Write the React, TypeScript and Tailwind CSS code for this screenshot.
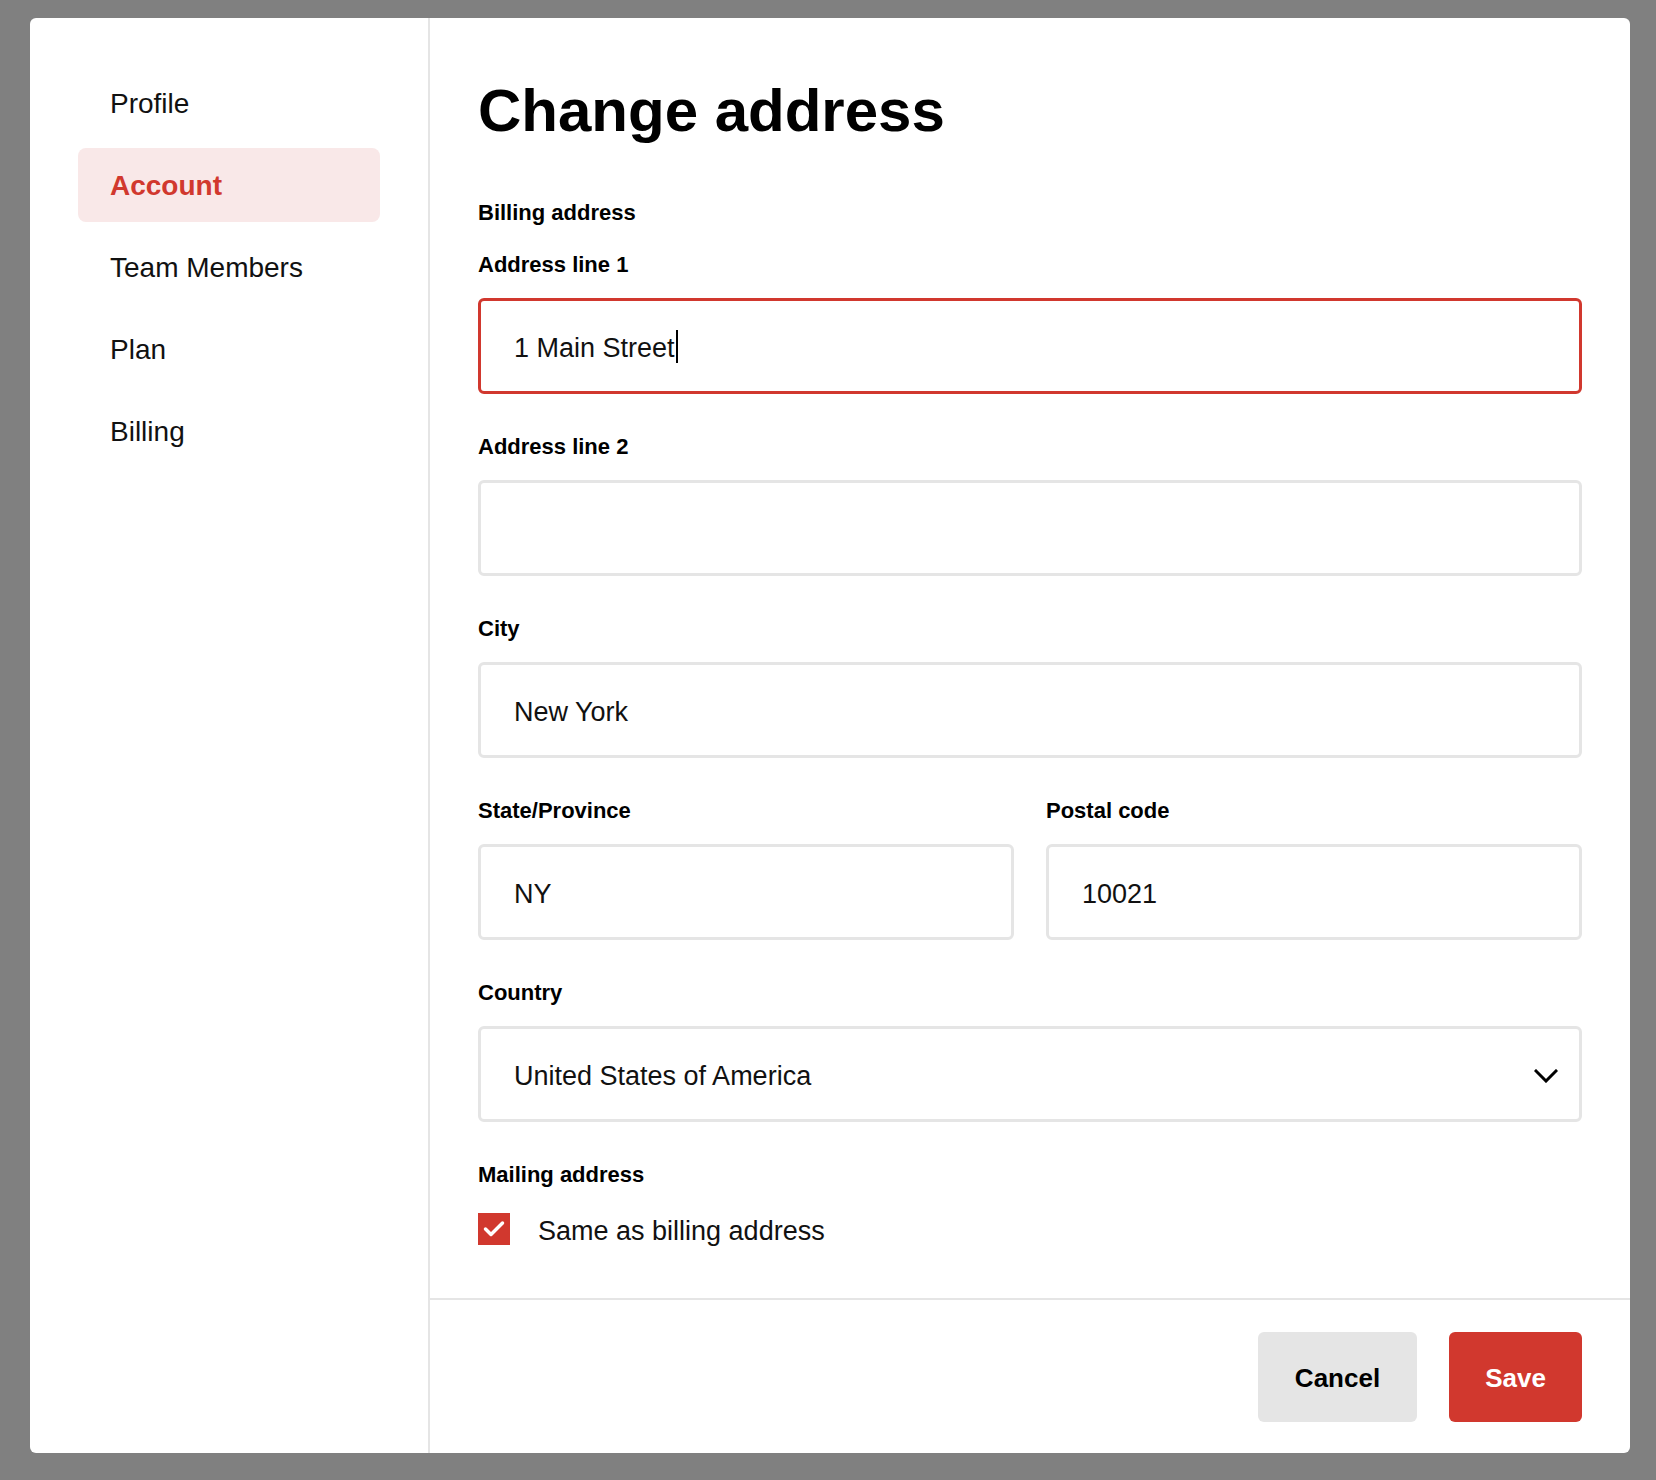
import React from "react";

const RED = "bg-[#d1382e]";

function Label({ children }: { children: React.ReactNode }) {
  return <div className="pt-[1px] text-[22px] font-bold leading-[30px] text-black">{children}</div>;
}

function Field({
  label,
  value,
  focused,
  caret,
}: {
  label: string;
  value?: string;
  focused?: boolean;
  caret?: boolean;
}) {
  return (
    <div className="flex flex-col">
      <Label>{label}</Label>
      <div
        className={
          "mt-[18px] flex h-[96px] items-center rounded-md border-[3px] pl-[33px] pt-[5px] text-[27px] text-[#111] " +
          (focused ? "border-[#d1382e]" : "border-[#e5e5e5]")
        }
      >
        <span>{value}</span>
        {caret && <span className="ml-[1px] mb-[4px] inline-block h-[33px] w-[2px] bg-black" />}
      </div>
    </div>
  );
}

export default function App() {
  const nav = ["Profile", "Account", "Team Members", "Plan", "Billing"];
  return (
    <div className="min-h-[1480px] bg-[#808080] pb-[27px] pl-[30px] pr-[26px] pt-[18px] font-['Liberation_Sans',Arial,sans-serif]">
      <div className="flex h-[1435px] overflow-hidden rounded-md bg-white">
        <aside className="w-[400px] shrink-0 border-r-2 border-[#e5e5e5] px-[48px] pt-[48px]">
          <nav className="flex flex-col gap-2">
            {nav.map((n) => (
              <div
                key={n}
                className={
                  "flex h-[74px] items-center rounded-lg pl-[32px] pt-[2px] text-[28px] " +
                  (n === "Account" ? "bg-[#f9e8e8] font-bold text-[#d1382e]" : "text-[#111]")
                }
              >
                {n}
              </div>
            ))}
          </nav>
        </aside>
        <div className="flex min-w-0 flex-1 flex-col">
          <div className="flex-1 px-[48px] pt-[63px]">
            <h1 className="text-[60px] font-bold leading-none text-black">Change address</h1>
            <div className="mt-[56px]">
              <Label>Billing address</Label>
            </div>
            <div className="mt-[21px] flex flex-col gap-[37px]">
              <Field label="Address line 1" value="1 Main Street" focused caret />
              <Field label="Address line 2" value="" />
              <Field label="City" value="New York" />
              <div className="grid grid-cols-2 gap-[32px]">
                <Field label="State/Province" value="NY" />
                <Field label="Postal code" value="10021" />
              </div>
              <div className="flex flex-col">
                <Label>Country</Label>
                <div className="mt-[18px] flex h-[96px] items-center justify-between rounded-md border-[3px] border-[#e5e5e5] pl-[33px] pr-[21px] text-[27px] text-[#111]">
                  <span className="pt-[5px]">United States of America</span>
                  <svg width="24" height="14" viewBox="0 0 24 14" fill="none" className="mt-[4px]">
                    <path d="M2 2 L12 12 L22 2" stroke="#000" strokeWidth="3" strokeLinecap="square" />
                  </svg>
                </div>
              </div>
              <div className="flex flex-col">
                <Label>Mailing address</Label>
                <div className="mt-[17px] flex items-center gap-[28px]">
                  <div className={"flex h-[32px] w-[32px] items-center justify-center " + RED}>
                    <svg width="32" height="32" viewBox="0 0 32 32" fill="none">
                      <path d="M7.5 16 L13 21.5 L24.5 10" stroke="#fff" strokeWidth="3.5" strokeLinecap="round" strokeLinejoin="round" />
                    </svg>
                  </div>
                  <span className="pt-[4px] text-[27px] text-[#111]">Same as billing address</span>
                </div>
              </div>
            </div>
          </div>
          <div className="flex justify-end gap-[32px] border-t-2 border-[#e5e5e5] px-[48px] pb-[31px] pt-[32px]">
            <button className="flex h-[90px] w-[159px] items-center justify-center rounded-md bg-[#e5e5e5] pt-[2px] text-[26px] font-bold text-black">
              Cancel
            </button>
            <button className={"flex h-[90px] w-[133px] items-center justify-center rounded-md pt-[2px] text-[26px] font-bold text-white " + RED}>
              Save
            </button>
          </div>
        </div>
      </div>
    </div>
  );
}
